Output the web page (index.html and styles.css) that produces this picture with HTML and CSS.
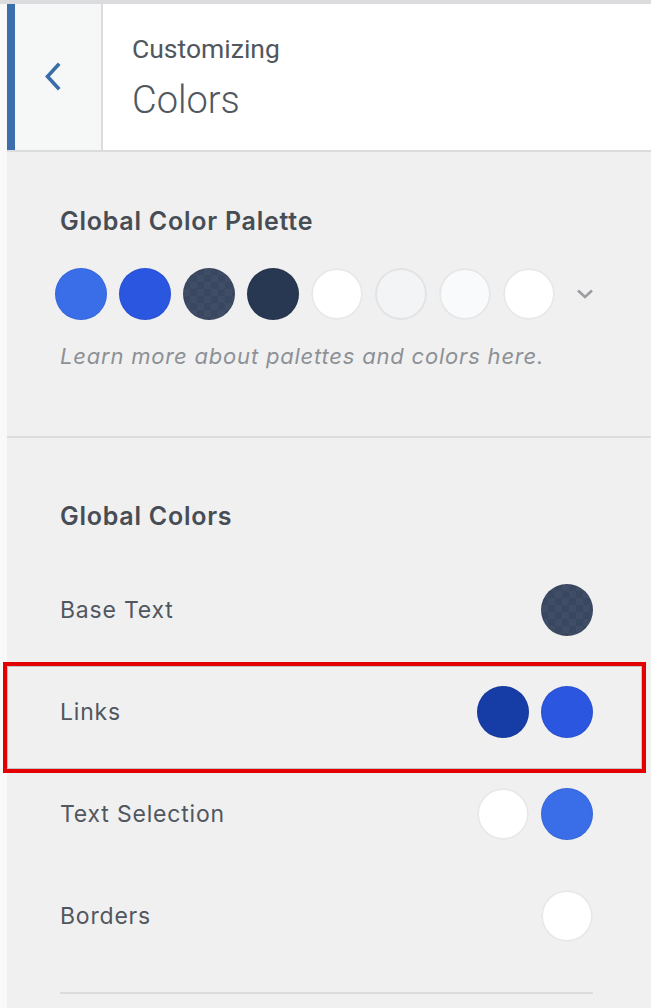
FILE: index.html
```html
<!DOCTYPE html>
<html lang="en">
<head>
<meta charset="utf-8">
<title>Customizing Colors</title>
<link rel="stylesheet" href="styles.css">
</head>
<body>
<div class="app">
  <div class="gutter"></div>
  <div class="panel">
    <header class="head">
      <button class="back" aria-label="Back">
        <svg width="18" height="30" viewBox="0 0 18 30"><path d="M14 3 L3.5 14.5 L14 26" fill="none" stroke="#3a6ea8" stroke-width="3.6" stroke-linecap="square" stroke-linejoin="miter"/></svg>
      </button>
      <div class="title">
        <div class="crumb">Customizing</div>
        <div class="name">Colors</div>
      </div>
    </header>

    <section class="palette-section">
      <h2 class="heading">Global Color Palette</h2>
      <div class="palette">
        <span class="dot c-blue"></span>
        <span class="dot c-blue2"></span>
        <span class="dot c-slate checker"></span>
        <span class="dot c-navy"></span>
        <span class="dot c-white"></span>
        <span class="dot c-grey"></span>
        <span class="dot c-snow"></span>
        <span class="dot c-white"></span>
        <svg class="more" width="18" height="12" viewBox="0 0 18 12"><path d="M2 2.5 L9 9 L16 2.5" fill="none" stroke="#9a9ca0" stroke-width="2.6"/></svg>
      </div>
      <p class="hint">Learn more about palettes and colors here.</p>
    </section>

    <section class="colors-section">
      <h2 class="heading">Global Colors</h2>
      <div class="row"><span class="label">Base Text</span><span class="swatches"><span class="dot c-slate checker"></span></span></div>
      <div class="row"><span class="label">Links</span><span class="swatches"><span class="dot c-deep"></span><span class="dot c-blue2"></span></span></div>
      <div class="row"><span class="label">Text Selection</span><span class="swatches"><span class="dot c-white"></span><span class="dot c-blue"></span></span></div>
      <div class="row"><span class="label">Borders</span><span class="swatches"><span class="dot c-white"></span></span></div>
      <div class="rule"></div>
    </section>
  </div>
  <div class="highlight"></div>
</div>
</body>
</html>
```

FILE: styles.css
```css
* { box-sizing: border-box; }
html, body { margin: 0; padding: 0; }
body {
  background: #f0f0f1;
  font-family: Inter, "Liberation Sans", sans-serif;
  color: #50575e;
  width: 651px;
  height: 1008px;
  overflow: hidden;
}
.app {
  position: relative;
  display: flex;
  min-height: 1008px;
  border-top: 4px solid #dcdcde;
}
.gutter {
  width: 7px;
  flex: 0 0 7px;
  background: #f9f9f9;
}
.panel {
  flex: 1;
  background: #f0f0f1;
}
.head {
  display: flex;
  height: 148px;
  background: #fff;
  border-bottom: 2px solid #dcdcde;
}
.back {
  width: 96px;
  flex: 0 0 96px;
  border: 0;
  border-left: 8px solid #3b6eab;
  border-right: 2px solid #dcdcde;
  background: #f6f7f7;
  padding: 0 0 0 29px;
  display: flex;
  align-items: center;
  justify-content: flex-start;
  margin: 0;
}
.title {
  padding: 28px 0 0 29px;
  font-family: Roboto, "Liberation Sans", sans-serif;
}
.crumb {
  font-size: 26.5px;
  line-height: 34px;
  color: #50575e;
}
.name {
  font-size: 38px;
  font-weight: 300;
  line-height: 50px;
  margin-top: 9px;
  color: #50575e;
}
.heading {
  margin: 0;
  font-size: 25px;
  line-height: 30px;
  font-weight: 600;
  letter-spacing: 0.75px;
  color: #474d55;
}
.palette-section {
  padding: 54px 0 67px 53px;
  border-bottom: 2px solid #dcdcde;
}
.palette {
  display: flex;
  align-items: center;
  gap: 12px;
  margin: 32px 0 0 -5px;
}
.dot {
  display: block;
  width: 52px;
  height: 52px;
  border-radius: 50%;
  box-shadow: inset 0 0 0 1px rgba(0,0,0,0.07);
}
.more { margin-left: 9px; }
.c-blue { background: #3a6ee9; }
.c-blue2 { background: #2b56e0; }
.c-navy { background: #283852; }
.c-deep { background: #163ca6; }
.c-white { background: #fff; box-shadow: inset 0 0 0 2px #e8e8e9; }
.c-grey { background: #f3f4f6; box-shadow: inset 0 0 0 2px #e2e3e4; }
.c-snow { background: #f9fafb; box-shadow: inset 0 0 0 2px #e6e7e8; }
.c-slate {
  background-color: #3c4a62;
}
.checker {
  background-image: conic-gradient(#3f4d66 25%, #394760 0 50%, #3f4d66 0 75%, #394760 0);
  background-size: 14px 14px;
}
.hint {
  margin: 23px 0 0;
  font-size: 22px;
  line-height: 26px;
  font-style: italic;
  letter-spacing: 0.8px;
  color: #8d9095;
}
.colors-section {
  padding: 63px 58px 0 53px;
}
.colors-section .heading { margin-bottom: 28px; }
.row {
  display: flex;
  align-items: center;
  justify-content: space-between;
  height: 102px;
}
.label {
  font-size: 23px;
  line-height: 30px;
  letter-spacing: 0.8px;
  color: #50575e;
}
.swatches {
  display: flex;
  gap: 12px;
}
.rule {
  margin-top: 25px;
  height: 2px;
  background: #dcdcde;
}
.highlight {
  position: absolute;
  left: 3px;
  top: 658px;
  width: 643px;
  height: 111px;
  border: 4px solid #e30000;
  box-shadow: inset 0 0 0 1px rgba(0,0,0,0.18);
  pointer-events: none;
}
```
